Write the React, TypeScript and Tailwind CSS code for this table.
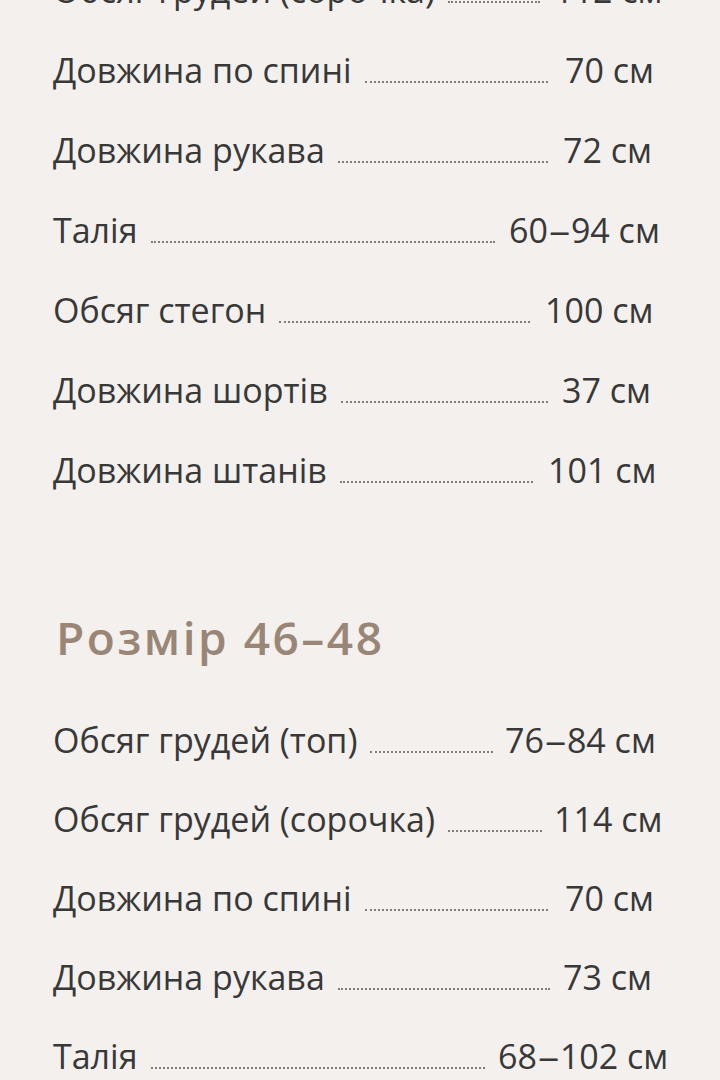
import React from 'react';

// dotEnd / valueAt are x positions on the page
type Row = { label: string; value: string; dotEnd: number; valueAt: number };

const LEFT = 53;

const topRows: Row[] = [
  { label: 'Обсяг грудей (сорочка)', value: '112 см', dotEnd: 540, valueAt: 554 },
  { label: 'Довжина по спині', value: '70 см', dotEnd: 548, valueAt: 565 },
  { label: 'Довжина рукава', value: '72 см', dotEnd: 548, valueAt: 563 },
  { label: 'Талія', value: '60–94 см', dotEnd: 495, valueAt: 509 },
  { label: 'Обсяг стегон', value: '100 см', dotEnd: 530, valueAt: 545 },
  { label: 'Довжина шортів', value: '37 см', dotEnd: 548, valueAt: 562 },
  { label: 'Довжина штанів', value: '101 см', dotEnd: 533, valueAt: 548 },
];

const bottomRows: Row[] = [
  { label: 'Обсяг грудей (топ)', value: '76–84 см', dotEnd: 493, valueAt: 505 },
  { label: 'Обсяг грудей (сорочка)', value: '114 см', dotEnd: 542, valueAt: 554 },
  { label: 'Довжина по спині', value: '70 см', dotEnd: 548, valueAt: 565 },
  { label: 'Довжина рукава', value: '73 см', dotEnd: 550, valueAt: 563 },
  { label: 'Талія', value: '68–102 см', dotEnd: 485, valueAt: 498 },
];

const Value: React.FC<{ text: string }> = ({ text }) => {
  const parts = text.split('–');
  if (parts.length < 2) return <>{text}</>;
  return (
    <>
      {parts[0]}
      <span className="inline-block mx-[3px] scale-x-125">–</span>
      {parts[1]}
    </>
  );
};

const SizeRow: React.FC<{ row: Row; tall?: boolean }> = ({ row, tall }) => (
  <div className={`${tall ? 'h-[80px]' : 'h-[79px]'} flex items-center whitespace-nowrap`}>
    <div className="flex items-baseline">
      <div className="flex items-baseline gap-[13px] shrink-0" style={{ width: row.dotEnd - LEFT }}>
        <span>{row.label}</span>
        <span className="block flex-1 h-[2px] border-b-2 border-dotted border-[#7e7e7e]" />
      </div>
      <span style={{ marginLeft: row.valueAt - row.dotEnd }}>
        <Value text={row.value} />
      </span>
    </div>
  </div>
);

export default function App() {
  return (
    <div
      className="w-[720px] h-[1080px] overflow-hidden bg-[#f3f0ed] text-[#383838] text-[34px] leading-none pl-[53px]"
      style={{ fontFamily: '"Open Sans", "Noto Sans", sans-serif' }}
    >
      <div className="-mt-[50px]">
        {topRows.map((r, i) => (
          <SizeRow key={'t' + i} row={r} tall />
        ))}
      </div>
      <div className="h-[87px]" />
      <h2 className="text-[46px] font-semibold tracking-[0.055em] text-[#9a8676] leading-none h-[80px] flex items-center pl-[3px]">
        Розмір 46–48
      </h2>
      <div className="mt-[23px]">
        {bottomRows.map((r, i) => (
          <SizeRow key={'b' + i} row={r} />
        ))}
      </div>
    </div>
  );
}
